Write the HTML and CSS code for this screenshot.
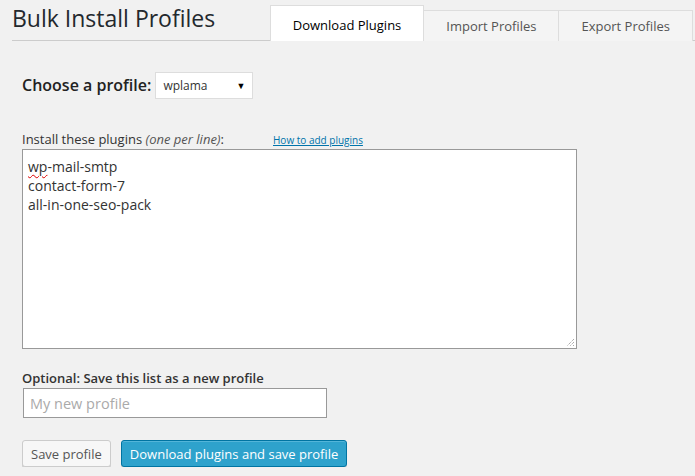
FILE: index.html
```html
<!DOCTYPE html>
<html>
<head>
<meta charset="utf-8">
<link rel="stylesheet" href="styles.css">
</head>
<body>
<div class="wrap">
  <div class="header">
    <h2 class="title">Bulk Install Profiles</h2>
    <nav class="tabs">
      <a class="tab active">Download Plugins</a>
      <a class="tab">Import Profiles</a>
      <a class="tab">Export Profiles</a>
    </nav>
  </div>
  <div class="content">
    <div class="choose">
      <span class="choose-label">Choose a profile:</span>
      <div class="select"><span>wplama</span><span class="arrow">▼</span></div>
    </div>
    <div class="label-row">
      <span class="label">Install these plugins <em>(one per line)</em>:</span>
      <a class="howto">How to add plugins</a>
    </div>
    <div class="textarea">
      <div><span class="misspelled">wp</span>-mail-smtp</div>
      <div>contact-form-7</div>
      <div>all-in-one-seo-pack</div>
      <svg class="grip" width="9" height="9" viewBox="0 0 9 9"><path d="M8 1L1 8M8 4L4 8M8 7L7 8" stroke="#888" stroke-width="1" stroke-dasharray="1 1" fill="none"/></svg>
    </div>
    <div class="optional">Optional: Save this list as a new profile</div>
    <div class="input"><span class="placeholder">My new profile</span></div>
    <div class="buttons">
      <button class="btn">Save profile</button>
      <button class="btn primary">Download plugins and save profile</button>
    </div>
  </div>
</div>
</body>
</html>
```
FILE: styles.css
```css
html, body {
  margin: 0;
  padding: 0;
  background: #f1f1f1;
  font-family: "Open Sans", sans-serif;
  color: #444;
}
.wrap {
  padding-left: 12px;
}
.header {
  display: flex;
  align-items: flex-end;
  border-bottom: 1px solid #ccc;
  height: 40px;
}
.title {
  margin: 4px 0 0 0;
  font-size: 23px;
  font-weight: 400;
  color: #23282d;
  line-height: 29px;
  align-self: flex-start;
}
.tabs {
  display: flex;
  align-items: flex-end;
  margin-left: auto;
  margin-right: 2px;
  margin-bottom: -1px;
}
.tab {
  display: block;
  font-size: 13px;
  line-height: 18px;
  padding: 6px 22px 6px;
  border: 1px solid #ddd;
  border-bottom: none;
  background: #f4f4f4;
  color: #555;
  margin-left: -1px;
}
.tab.active {
  background: #fff;
  color: #000;
  padding: 10px 22px 7px;
}
.content {
  padding-left: 10px;
}
.choose {
  display: flex;
  align-items: center;
  margin-top: 31px;
}
.choose-label {
  font-size: 16px;
  font-weight: 600;
  color: #222;
  margin-right: 4px;
  position: relative;
  top: -1px;
}
.select {
  background: #fff;
  border: 1px solid #ddd;
  display: flex;
  align-items: center;
  justify-content: space-between;
  padding: 0 7px;
  box-sizing: border-box;
  width: 98px;
  height: 27px;
  font-size: 12px;
  color: #333;
}
.arrow {
  font-size: 9px;
  color: #000;
}
.label-row {
  display: flex;
  align-items: baseline;
  margin-top: 31px;
  height: 18px;
}
.label {
  font-size: 13px;
  color: #333;
  width: 251px;
}
.label em {
  color: #555;
}
.howto {
  font-size: 10px;
  color: #0073aa;
  text-decoration: underline;
}
.textarea {
  position: relative;
  width: 555px;
  height: 200px;
  box-sizing: border-box;
  border: 1px solid #999;
  background: #fff;
  margin-top: 1px;
  padding: 7px 5px;
  font-size: 14px;
  line-height: 19px;
  color: #333;
}
.misspelled {
  text-decoration: underline wavy #d00;
  text-decoration-thickness: 1px;
  text-underline-offset: 2px;
}
.grip {
  position: absolute;
  right: 1px;
  bottom: 1px;
}
.optional {
  margin-top: 20px;
  font-size: 13px;
  font-weight: 600;
  color: #333;
}
.input {
  margin-top: 1px;
  margin-left: 1px;
  width: 304px;
  height: 30px;
  box-sizing: border-box;
  border: 1px solid #999;
  background: #fff;
  display: flex;
  align-items: center;
  padding-left: 6px;
}
.placeholder {
  font-size: 14.5px;
  color: #aaa;
}
.buttons {
  display: flex;
  gap: 10px;
  margin-top: 22px;
}
.btn {
  font-family: "Open Sans", sans-serif;
  font-size: 13px;
  white-space: nowrap;
  height: 27px;
  padding: 0 8px;
  border: 1px solid #ccc;
  border-radius: 3px;
  background: #f7f7f7;
  color: #555;
  box-shadow: 0 1px 0 #ccc;
}
.btn.primary {
  background: #2ea2cc;
  border-color: #0074a2;
  color: #fff;
  box-shadow: inset 0 1px 0 rgba(120,200,230,.5), 0 1px 0 rgba(0,0,0,.15);
}
```
